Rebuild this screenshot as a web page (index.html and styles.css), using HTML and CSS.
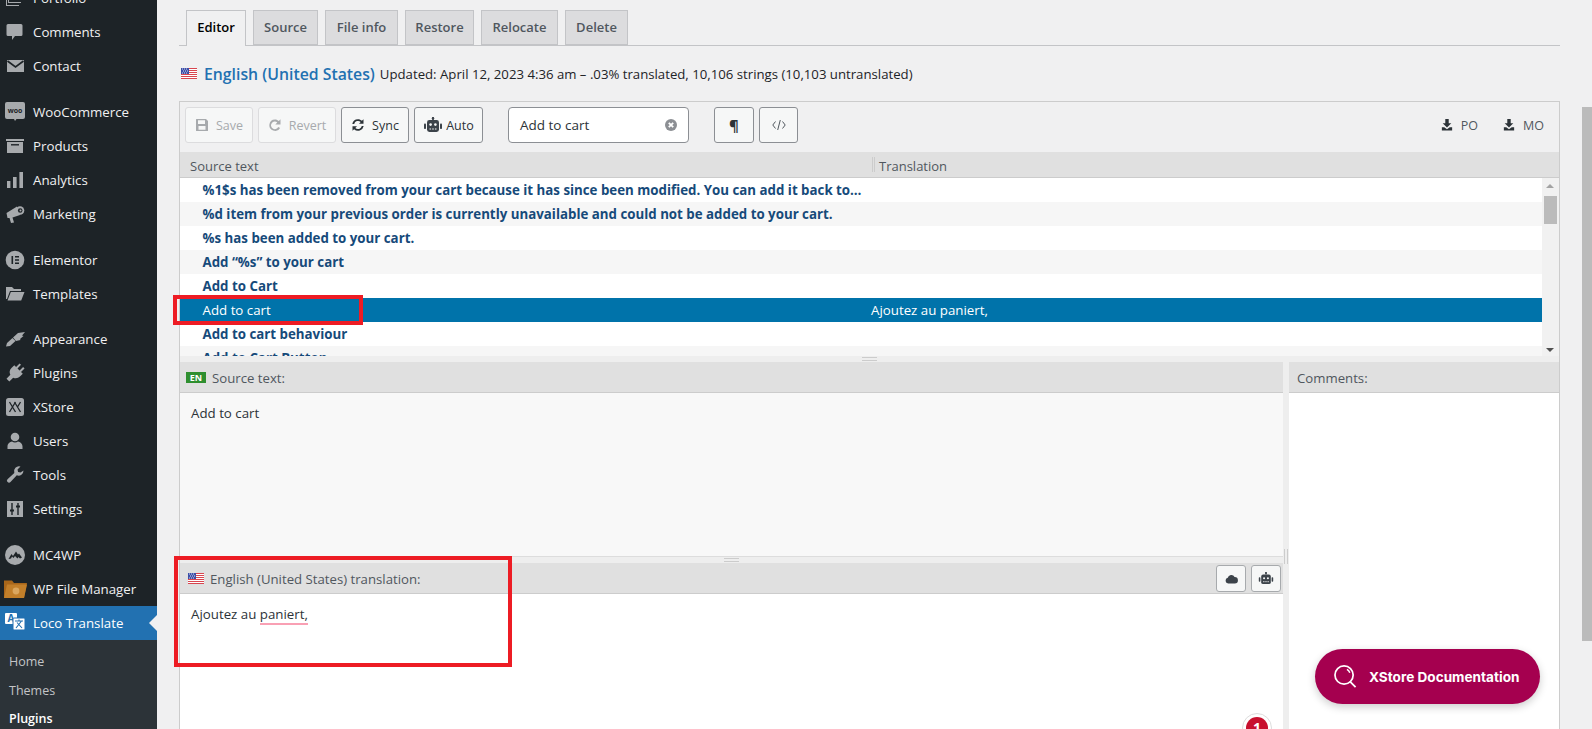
FILE: index.html
```html
<!DOCTYPE html>
<html lang="en">
<head>
    <meta charset="UTF-8">
    <title>Loco Translate - Editor</title>
    <link rel="stylesheet" href="styles.css">
</head>
<body>
    <svg class="defs" width="0" height="0">
        <symbol id="flag" viewBox="0 0 16 11">
            <rect width="16" height="11" fill="#fff"/>
            <path d="M0 .5h16M0 2.500h16M0 4.500h16M0 6.500h16M0 8.500h16M0 10.500h16" stroke="#d8454f" stroke-width="1"/>
            <rect width="8" height="6" fill="#3c4fa8"/>
            <path d="M1 1h1M3 1h1M5 1h1M2 3h1M4 3h1M6 3h1M1 5h1M3 5h1M5 5h1" stroke="#fff" stroke-width=".8"/>
        </symbol>
        <symbol id="robot" viewBox="0 0 20 16">
            <rect x="9.200" y="0" width="1.600" height="3"/>
            <circle cx="10" cy="1.200" r="1.200"/>
            <rect x="4" y="3" width="12" height="12" rx="2.400"/>
            <rect x="1" y="6.500" width="2" height="5.500" rx=".8"/>
            <rect x="17" y="6.500" width="2" height="5.500" rx=".8"/>
            <circle cx="7.600" cy="7.600" r="1.300" fill="#f6f7f7"/>
            <circle cx="12.400" cy="7.600" r="1.300" fill="#f6f7f7"/>
            <path d="M6.500 12h1.600M9.200 12h1.600M11.900 12h1.600" stroke="#f6f7f7" stroke-width="1.200"/>
        </symbol>
        <symbol id="download" viewBox="0 0 14 14">
            <path d="M5 0h4v5h3L7 10 2 5h3z"/>
            <path d="M1 9.500h2.800L7 12l3.200-2.500H13V13.500H1z"/>
        </symbol>
    </svg>

    <div class="page">
        <aside class="sidebar">
            <ul class="menu">
                <li class="menu-item">
                    <svg class="menu-icon" viewBox="0 0 20 20"><path d="M5 2h13v10H5zM3 5h1v9h12v1H3zM1 8h1v9h12v1H1z"/></svg>
                    Portfolio
                </li>
                <li class="menu-item">
                    <svg class="menu-icon" viewBox="0 0 20 20"><path d="M3 2h13a1.500 1.500 0 0 1 1.500 1.500v9a1.500 1.500 0 0 1-1.500 1.500h-6l-3 4v-4H3a1.500 1.500 0 0 1-1.500-1.500v-9A1.500 1.500 0 0 1 3 2z"/></svg>
                    Comments
                </li>
                <li class="menu-item">
                    <svg class="menu-icon" viewBox="0 0 20 20"><path d="M2 4h17v12H2z"/><path d="M2.500 5l8 6 8-6" fill="none" stroke="#1d2327" stroke-width="1.600"/></svg>
                    Contact
                </li>
                <li class="menu-item menu-first">
                    <svg class="menu-icon" viewBox="0 0 20 20"><path d="M2 0h16a2 2 0 0 1 2 2v13a2 2 0 0 1-2 2h-6.500L10 19l-1-2H2a2 2 0 0 1-2-2V2a2 2 0 0 1 2-2z"/><text x="10" y="11" class="woo-mark">woo</text></svg>
                    WooCommerce
                </li>
                <li class="menu-item">
                    <svg class="menu-icon" viewBox="0 0 20 20"><path d="M1 3h18v2H1zM2 6h16v11H2z"/><path d="M6 8.800h8" stroke="#1d2327" stroke-width="1.400"/></svg>
                    Products
                </li>
                <li class="menu-item">
                    <svg class="menu-icon" viewBox="0 0 20 20"><path d="M2 11h3.400v7H2zM8 7h3.600v11H8zM14.400 2H18v16h-3.600z"/></svg>
                    Analytics
                </li>
                <li class="menu-item">
                    <svg class="menu-icon" viewBox="0 0 20 20"><path d="M1.500 9L12 2.500 15 11l-7.500 2.500L9 18.500 6 19l-1.500-5h-2z"/><circle cx="15" cy="6.500" r="4.300"/><circle cx="15.200" cy="6.500" r="2.300" fill="#1d2327"/><circle cx="15.500" cy="6.500" r="1"/></svg>
                    Marketing
                </li>
                <li class="menu-item menu-first">
                    <svg class="menu-icon" viewBox="0 0 20 20"><circle cx="10" cy="10" r="9.300"/><path d="M6.500 6h1.600v8H6.500zM10 6h4v1.500h-4zM10 9.250h4v1.500h-4zM10 12.500h4V14h-4z" fill="#1d2327"/></svg>
                    Elementor
                </li>
                <li class="menu-item">
                    <svg class="menu-icon" viewBox="0 0 20 20"><path d="M1 3h6l2 2h7v2H5L2 15H1zM5.800 8H19.500l-3.300 8.500H2.500z"/></svg>
                    Templates
                </li>
                <li class="menu-item menu-first">
                    <svg class="menu-icon" viewBox="0 0 20 20"><path d="M1 17.500L2 14l5.500-5 3 3L5 17zM8 8.500L13 4l7-1-3 3.500 1.500.5-3.500 3 .5 1-4.500 1z"/></svg>
                    Appearance
                </li>
                <li class="menu-item">
                    <svg class="menu-icon" viewBox="0 0 20 20"><g transform="rotate(45 10 10)"><path d="M6.500 0h2v5h-2zM11.500 0h2v5h-2zM4 5h12v4a6 6 0 0 1-4 5.600V20H8v-5.400A6 6 0 0 1 4 9z"/></g></svg>
                    Plugins
                </li>
                <li class="menu-item">
                    <svg class="menu-icon" viewBox="0 0 20 20"><rect x="1" y="1" width="18" height="18" rx="2.500"/><path d="M4.500 5l6 10M10.500 5l-6 10M9.500 5l6 10M15.500 5l-3 5" fill="none" stroke="#1d2327" stroke-width="1.300"/></svg>
                    XStore
                </li>
                <li class="menu-item">
                    <svg class="menu-icon" viewBox="0 0 20 20"><circle cx="10" cy="6" r="4.300"/><path d="M2.500 18v-2.500C2.500 12.500 5 11 7 10.500c1.800 1.300 4.200 1.300 6 0 2 .5 4.500 2 4.500 5V18z"/></svg>
                    Users
                </li>
                <li class="menu-item">
                    <svg class="menu-icon" viewBox="0 0 20 20"><path d="M18.500 5.500a5 5 0 0 1-6.700 4.800L5.500 17a2 2 0 0 1-3-2.800l6.800-6.300A5 5 0 0 1 15.500 1.500L12.500 4.500l.6 2.400 2.400.6z"/></svg>
                    Tools
                </li>
                <li class="menu-item">
                    <svg class="menu-icon" viewBox="0 0 20 20"><path d="M2 2h16v16H2z"/><path d="M7 4v12M13 4v12" stroke="#1d2327" stroke-width="1.400"/><path d="M5 11.500h4M11 7.500h4" stroke="#1d2327" stroke-width="2"/></svg>
                    Settings
                </li>
                <li class="menu-item menu-first">
                    <svg class="menu-icon" viewBox="0 0 20 20"><circle cx="10" cy="10" r="10"/><path d="M3.500 14l3-5 1.500 2 3-4.500 2 3 1-1 3 4-2 1-1.500-1.500-1 1.500-2.500-2.500-1.500 2-1.500-1.500-1 2z" fill="#1d2327"/></svg>
                    MC4WP
                </li>
                <li class="menu-item">
                    <svg class="menu-icon" viewBox="0 0 20 20"><path d="M-1 1.500h8l2 2.500h13l-3 15H-1z" fill="#a8661a"/><path d="M2 5.500h20l-3 13.500H-1z" fill="#c27f2a"/><circle cx="11" cy="12" r="3.400" fill="#dba75f"/></svg>
                    WP File Manager
                </li>
                <li class="menu-item menu-current">
                    <svg class="menu-icon" viewBox="0 0 20 20">
                        <rect x="0" y="0" width="12" height="11" rx="1" fill="#fff"/>
                        <text x="6" y="9" class="loco-mark">A</text>
                        <rect x="8" y="5" width="12" height="12" rx="1" fill="#fff" stroke="#2271b1" stroke-width="1"/>
                        <path d="M10 8h8M14 6.500V8M11 15l5.500-7M12 9.500l5 5.500" fill="none" stroke="#2271b1" stroke-width="1.100"/>
                    </svg>
                    Loco Translate
                </li>
            </ul>
            <ul class="submenu">
                <li>Home</li>
                <li>Themes</li>
                <li class="submenu-current">Plugins</li>
            </ul>
        </aside>

        <main class="content">
            <nav class="tabs">
                <a class="tab tab-active">Editor</a>
                <a class="tab">Source</a>
                <a class="tab">File info</a>
                <a class="tab">Restore</a>
                <a class="tab">Relocate</a>
                <a class="tab">Delete</a>
            </nav>

            <div class="file-title">
                <svg class="flag"><use href="#flag"/></svg>
                <a class="locale-name">English (United States)</a>
                <span class="file-meta">Updated: April 12, 2023 4:36 am – .03% translated, 10,106 strings (10,103 untranslated)</span>
            </div>

            <section class="editor">
                <div class="toolbar">
                    <button class="btn" disabled>
                        <svg class="btn-icon" viewBox="0 0 14 14"><path fill-rule="evenodd" d="M1.500 1H11l2 2v9.500a.5.5 0 0 1-.5.5h-11a.5.5 0 0 1-.5-.5v-11a.5.5 0 0 1 .5-.5zM3 2.200V6h7V2.200zM3.500 8v3.800h7V8z"/></svg>
                        Save
                    </button>
                    <button class="btn" disabled>
                        <svg class="btn-icon" viewBox="0 0 14 14"><path d="M7 1.500c1.500 0 2.800.6 3.800 1.500L12.500 1.300V6.500H7.300l2-2a3.800 3.800 0 1 0 .9 4.600l1.900.8A5.700 5.700 0 1 1 7 1.500z"/></svg>
                        Revert
                    </button>
                    <button class="btn">
                        <svg class="btn-icon" viewBox="0 0 14 14"><path d="M7 1.200c1.500 0 2.900.6 3.900 1.600L12.500 1.200v4.500H8l1.700-1.700A3.900 3.900 0 0 0 3.200 6H1.300A5.800 5.800 0 0 1 7 1.200zM1.500 8.300H6L4.300 10a3.900 3.900 0 0 0 6.500-2h1.900A5.800 5.800 0 0 1 3.100 11.200L1.500 12.800z"/></svg>
                        Sync
                    </button>
                    <button class="btn">
                        <svg class="btn-icon btn-icon-wide"><use href="#robot"/></svg>
                        Auto
                    </button>
                    <div class="search">
                        <span>Add to cart</span>
                        <svg class="search-clear" viewBox="0 0 12 12"><circle cx="6" cy="6" r="6"/><path d="M3.800 3.800l4.400 4.400M8.200 3.800L3.800 8.200" stroke="#fff" stroke-width="1.800"/></svg>
                    </div>
                    <button class="btn btn-para">¶</button>
                    <button class="btn">
                        <svg class="btn-code" viewBox="0 0 14 12"><path d="M3.500 2.500L.8 6l2.700 3.500M10.500 2.500L13.200 6l-2.700 3.500M8.300 1L5.700 11" fill="none" stroke="#50575e" stroke-width="1"/></svg>
                    </button>
                    <div class="downloads">
                        <a class="download"><svg class="download-icon"><use href="#download"/></svg>PO</a>
                        <a class="download"><svg class="download-icon"><use href="#download"/></svg>MO</a>
                    </div>
                </div>

                <div class="list-head">
                    <div class="list-head-source">Source text</div>
                    <div class="list-head-target">Translation</div>
                </div>

                <div class="list">
                    <div class="rows">
                        <div class="row"><span class="row-source">%1$s has been removed from your cart because it has since been modified. You can add it back to…</span></div>
                        <div class="row"><span class="row-source">%d item from your previous order is currently unavailable and could not be added to your cart.</span></div>
                        <div class="row"><span class="row-source">%s has been added to your cart.</span></div>
                        <div class="row"><span class="row-source">Add “%s” to your cart</span></div>
                        <div class="row"><span class="row-source">Add to Cart</span></div>
                        <div class="row row-selected"><span class="row-source">Add to cart</span><span>Ajoutez au paniert,</span></div>
                        <div class="row"><span class="row-source">Add to cart behaviour</span></div>
                        <div class="row"><span class="row-source">Add to Cart Button</span></div>
                    </div>
                    <div class="list-scroll">
                        <span class="arrow-up"></span>
                        <span class="list-thumb"></span>
                        <span class="arrow-down"></span>
                    </div>
                </div>

                <div class="split-h"><span class="grip-h grip-list"></span></div>

                <div class="panels">
                    <div class="panels-main">
                        <div class="panel panel-source">
                            <div class="panel-head">
                                <span class="lang-badge">EN</span>
                                Source text:
                            </div>
                            <div class="panel-body panel-body-source">Add to cart</div>
                        </div>
                        <div class="split-h"><span class="grip-h grip-panel"></span></div>
                        <div class="panel panel-target">
                            <div class="panel-head">
                                <svg class="flag"><use href="#flag"/></svg>
                                English (United States) translation:
                                <div class="panel-actions">
                                    <button class="btn-small">
                                        <svg class="small-icon small-cloud" viewBox="0 0 16 12"><path d="M4 11.500a3.500 3.500 0 0 1-.6-6.900A4.500 4.500 0 0 1 11.800 3.500 4 4 0 0 1 12 11.500z"/></svg>
                                    </button>
                                    <button class="btn-small">
                                        <svg class="small-icon"><use href="#robot"/></svg>
                                    </button>
                                </div>
                            </div>
                            <div class="panel-body">Ajoutez au <span class="misspelled">paniert,</span></div>
                        </div>
                    </div>
                    <div class="split-v"><span class="grip-v"></span></div>
                    <div class="panel panel-comments">
                        <div class="panel-head">Comments:</div>
                        <div class="panel-body"></div>
                    </div>
                </div>
            </section>
        </main>

        <div class="page-scroll"></div>

        <div class="mark mark-row"></div>
        <div class="mark mark-translation"></div>

        <a class="docs-btn">
            <svg class="docs-icon" viewBox="0 0 24 24"><circle cx="10.500" cy="10.500" r="9.500" fill="none" stroke="#fff" stroke-width="1.800"/><path d="M16.500 17l6 6" stroke="#fff" stroke-width="1.800"/><path d="M13.500 4.500a6.500 6.500 0 0 1 3 3.500" fill="none" stroke="#fff" stroke-width="1.500"/></svg>
            XStore Documentation
        </a>
        <div class="notice-badge"><span>1</span></div>
    </div>
</body>
</html>
```

FILE: styles.css
```css
html, body {
    margin: 0;
    height: 729px;
    overflow: hidden;
}
body {
    font-family: "Open Sans", "Noto Sans", sans-serif;
    font-size: 13px;
    color: #3c434a;
    background-color: #f0f0f1;
}
ul {
    list-style: none;
    margin: 0;
    padding: 0;
}
button {
    font-family: inherit;
}
.defs {
    position: absolute;
}
.page {
    position: relative;
    display: flex;
    height: 729px;
    overflow: hidden;
}

/* admin menu */
.sidebar {
    flex: 0 0 157px;
    background-color: #1d2327;
    color: #f0f0f1;
    font-size: 13.3px;
}
.menu {
    margin-top: -19px;
}
.menu-item {
    display: flex;
    align-items: center;
    gap: 8px;
    height: 34px;
    padding-left: 5px;
}
.menu-first {
    margin-top: 11.75px;
}
.menu-icon {
    flex: 0 0 20px;
    width: 20px;
    height: 20px;
    fill: #a7aaad;
    overflow: visible;
}
.woo-mark {
    font-size: 7px;
    font-weight: 700;
    text-anchor: middle;
    fill: #1d2327;
}
.loco-mark {
    font-size: 10px;
    font-weight: 700;
    text-anchor: middle;
    fill: #2271b1;
}
.menu-current {
    position: relative;
    background-color: #2271b1;
    color: #fff;
}
.menu-current::after {
    content: "";
    position: absolute;
    right: 0;
    top: 9px;
    border: 8px solid transparent;
    border-left: 0;
    border-right-color: #f0f0f1;
}
.submenu {
    background-color: #2c3338;
    color: #c3c4c7;
    font-size: 12.5px;
    padding: 8px 0 7px 9px;
}
.submenu li {
    height: 28.5px;
    line-height: 28px;
}
.submenu-current {
    color: #fff;
    font-weight: 600;
}

/* main column */
.content {
    flex: 1;
    display: flex;
    flex-direction: column;
    min-width: 0;
    padding: 10px 32px 0 22px;
}
.tabs {
    display: grid;
    grid-template-columns: 60px 65px 73px 69px 77px 63px;
    column-gap: 7px;
    padding-left: 7px;
    height: 35px;
    border-bottom: 1px solid #c3c4c7;
}
.tab {
    height: 35px;
    box-sizing: border-box;
    border: 1px solid #c3c4c7;
    background-color: #dcdcde;
    color: #50575e;
    font-size: 13px;
    font-weight: 600;
    line-height: 33px;
    text-align: center;
}
.tab-active {
    height: 36px;
    border-bottom: 0;
    background-color: #f0f0f1;
    color: #000;
}
.file-title {
    display: flex;
    align-items: center;
    height: 55px;
    padding-left: 2px;
}
.flag {
    flex: 0 0 16px;
    width: 16px;
    height: 11px;
}
.locale-name {
    margin-left: 7px;
    color: #2271b1;
    font-size: 15.8px;
    font-weight: 600;
}
.file-meta {
    margin-left: 5px;
    color: #1d2327;
    font-size: 13.2px;
}

/* editor box */
.editor {
    flex: 1;
    display: flex;
    flex-direction: column;
    min-height: 0;
    border: 1px solid #ccc;
    border-width: 1px 1px 0 1px;
}
.toolbar {
    display: grid;
    grid-template-columns: 68px 78px 68px 69px 201px 60px 39px 1fr;
    column-gap: 5px;
    align-items: start;
    flex: 0 0 50px;
    box-sizing: border-box;
    padding: 5px 0 0 5px;
}
.btn {
    display: flex;
    align-items: center;
    justify-content: center;
    gap: 7px;
    height: 36px;
    padding: 0;
    border: 1px solid #8c8f94;
    border-radius: 3px;
    background-color: #f6f7f7;
    color: #2c3338;
    font-size: 12.5px;
}
.btn:disabled {
    border-color: #dcdcde;
    color: #a7aaad;
}
.btn-icon {
    width: 14px;
    height: 14px;
    fill: #2c3338;
}
.btn:disabled .btn-icon {
    fill: #a7aaad;
}
.btn-icon-wide {
    width: 20px;
    height: 16px;
    margin-right: -4px;
    fill: #3c434a;
}
.btn-para {
    margin-left: 20px;
    font-size: 15px;
    font-weight: 700;
}
.btn-code {
    width: 14px;
    height: 12px;
}
.search {
    display: flex;
    align-items: center;
    justify-content: space-between;
    margin-left: 20px;
    height: 36px;
    box-sizing: border-box;
    padding: 0 11px;
    border: 1px solid #8c8f94;
    border-radius: 4px;
    background-color: #fff;
    color: #2c3338;
    font-size: 13.5px;
}
.search-clear {
    width: 12px;
    height: 12px;
    fill: #8c8f94;
}
.downloads {
    display: flex;
    justify-content: flex-end;
    gap: 25px;
    height: 36px;
    padding-right: 15px;
}
.download {
    display: flex;
    align-items: center;
    gap: 8px;
    color: #50575e;
    font-size: 12.5px;
}
.download-icon {
    width: 12px;
    height: 12px;
    fill: #2c3338;
}

/* string list */
.list-head {
    display: flex;
    flex: 0 0 26px;
    min-height: 0;
    height: 26px;
    box-sizing: border-box;
    background-color: #e0e0e0;
    border-bottom: 1px solid #ccc;
    font-size: 13px;
    color: #50575e;
}
.list-head-source {
    flex: 0 0 692px;
    box-sizing: border-box;
    height: 25px;
    padding-left: 10px;
    line-height: 29px;
}
.list-head-target {
    padding-left: 4px;
    border-left: 3px double #ccc;
    height: 15px;
    line-height: 18px;
    margin-top: 5px;
}
.list {
    display: flex;
    flex: 0 0 178px;
    height: 178px;
    background-color: #fff;
}
.rows {
    flex: 1;
    min-width: 0;
    overflow: hidden;
}
.row {
    display: flex;
    height: 24px;
    line-height: 24px;
    font-size: 13.3px;
}
.row:nth-child(even) {
    background-color: #f6f6f6;
}
.row-source {
    flex: 0 0 691px;
    box-sizing: border-box;
    padding-left: 22.5px;
    color: #164a7a;
    font-weight: 700;
    white-space: nowrap;
    overflow: hidden;
}
.row-selected,
.row-selected:nth-child(even) {
    background-color: #0073aa;
    color: #fff;
}
.row-selected .row-source {
    color: #fff;
    font-weight: 400;
}
.list-scroll {
    position: relative;
    flex: 0 0 17px;
    background-color: #f1f1f1;
}
.list-thumb {
    position: absolute;
    top: 18px;
    left: 2px;
    width: 13px;
    height: 28px;
    background-color: #bbb;
}
.arrow-up,
.arrow-down {
    position: absolute;
    left: 4px;
    border: 4px solid transparent;
}
.arrow-up {
    top: 6px;
    border-top: 0;
    border-bottom-color: #a3a3a3;
}
.arrow-down {
    bottom: 4px;
    border-bottom: 0;
    border-top-color: #505050;
}

/* splitters */
.split-h {
    display: flex;
    justify-content: center;
    flex: 0 0 6px;
    height: 6px;
    background-color: #eee;
}
.grip-h {
    margin-top: 1px;
    width: 15px;
    height: 2px;
    border: 1px solid #ccc;
    border-width: 1px 0;
}
.panels {
    flex: 1;
    display: flex;
    min-height: 0;
}
.panels-main {
    flex: 1;
    display: flex;
    flex-direction: column;
    min-width: 0;
}
.split-v {
    position: relative;
    flex: 0 0 6px;
    background-color: #eee;
}
.grip-v {
    position: absolute;
    top: 187px;
    left: 1px;
    width: 2px;
    height: 15px;
    border: 1px solid #ccc;
    border-width: 0 1px;
}

/* panels */
.panel {
    display: flex;
    flex-direction: column;
}
.panel-source {
    flex: 0 0 195px;
    border-bottom: 1px solid #ddd;
    box-sizing: border-box;
}
.panel-target {
    flex: 1;
}
.panel-comments {
    flex: 0 0 270px;
}
.panel-head {
    display: flex;
    align-items: center;
    flex: 0 0 31px;
    box-sizing: border-box;
    padding: 1px 0 0 8px;
    background-color: #e0e0e0;
    border-bottom: 1px solid #ccc;
    font-size: 13.2px;
    color: #50575e;
}
.panel-target .flag {
    margin-right: 6px;
}
.panel-body {
    flex: 1;
    padding: 11px;
    background-color: #fff;
    color: #2c3338;
    font-size: 13.3px;
    line-height: 18px;
}
.panel-body-source {
    background-color: #f8f8f8;
}
.lang-badge {
    width: 20px;
    height: 11px;
    margin: 0 6px 0 -2px;
    background-color: #2f8f2f;
    color: #fff;
    font-size: 9px;
    font-weight: 700;
    line-height: 11px;
    text-align: center;
}
.misspelled {
    border-bottom: 2px solid #f9a0b4;
}
.panel-actions {
    display: flex;
    gap: 5px;
    margin-left: auto;
    padding-right: 2px;
}
.btn-small {
    display: flex;
    align-items: center;
    justify-content: center;
    width: 30px;
    height: 27px;
    padding: 0;
    border: 1px solid #a7aaad;
    border-radius: 3px;
    background-color: #f6f7f7;
}
.small-icon {
    width: 16px;
    height: 13px;
    fill: #3c434a;
}
.small-cloud {
    width: 13px;
    height: 10px;
}

/* things lying over the page */
.page-scroll {
    position: absolute;
    top: 107px;
    right: 0;
    width: 10px;
    height: 534px;
    background-color: #bbb;
}
.mark {
    position: absolute;
    box-sizing: border-box;
    border: 4px solid #ed1c24;
}
.mark-row {
    left: 173px;
    top: 295px;
    width: 190px;
    height: 30px;
}
.mark-translation {
    left: 174px;
    top: 556px;
    width: 338px;
    height: 111px;
}
.docs-btn {
    position: absolute;
    left: 1315px;
    top: 649px;
    display: flex;
    align-items: center;
    gap: 12px;
    width: 225px;
    height: 55px;
    box-sizing: border-box;
    padding-left: 19px;
    border-radius: 28px;
    background-color: #a5004f;
    box-shadow: 0 3px 8px rgba(0, 0, 0, 0.2);
    color: #fff;
    font-family: "Inter", "Liberation Sans", sans-serif;
    font-size: 13.6px;
    font-weight: 700;
}
.docs-icon {
    width: 23px;
    height: 23px;
}
.notice-badge {
    position: absolute;
    left: 1242px;
    top: 713px;
    display: flex;
    align-items: center;
    justify-content: center;
    width: 30px;
    height: 30px;
    box-sizing: border-box;
    border: 1px solid #ddd;
    border-radius: 50%;
    background-color: #fff;
}
.notice-badge span {
    width: 22px;
    height: 22px;
    border-radius: 50%;
    background-color: #c8102e;
    color: #fff;
    font-size: 14px;
    font-weight: 700;
    line-height: 22px;
    text-align: center;
}
```
